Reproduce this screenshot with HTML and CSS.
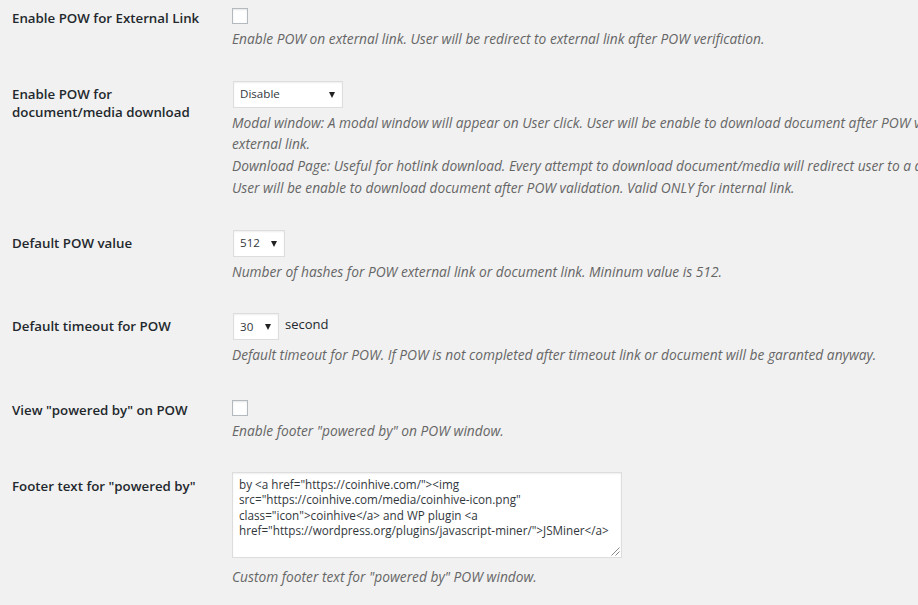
FILE: index.html
```html
<!DOCTYPE html>
<html>
<head>
<meta charset="utf-8">
<link rel="stylesheet" href="styles.css">
</head>
<body>
<div class="wrap">
<table class="form-table">
<tbody>
<tr>
<th>Enable POW for External Link</th>
<td>
<span class="checkbox"></span>
<p class="description">Enable POW on external link. User will be redirect to external link after POW verification.</p>
</td>
</tr>
<tr>
<th>Enable POW for document/media download</th>
<td>
<div class="select w-disable"><span>Disable</span><i class="arrow"></i></div>
<p class="description">Modal window: A modal window will appear on User click. User will be enable to download document after POW validation. Valid for internal and<br>external link.<br>Download Page: Useful for hotlink download. Every attempt to download document/media will redirect user to a download page.<br>User will be enable to download document after POW validation. Valid ONLY for internal link.</p>
</td>
</tr>
<tr>
<th>Default POW value</th>
<td>
<div class="select w-512"><span>512</span><i class="arrow"></i></div>
<p class="description">Number of hashes for POW external link or document link. Mininum value is 512.</p>
</td>
</tr>
<tr>
<th>Default timeout for POW</th>
<td>
<div class="inline"><div class="select w-30"><span>30</span><i class="arrow"></i></div><span class="unit">second</span></div>
<p class="description">Default timeout for POW. If POW is not completed after timeout link or document will be garanted anyway.</p>
</td>
</tr>
<tr>
<th>View "powered by" on POW</th>
<td>
<span class="checkbox"></span>
<p class="description">Enable footer "powered by" on POW window.</p>
</td>
</tr>
<tr>
<th>Footer text for "powered by"</th>
<td>
<div class="textarea">by &lt;a href="https://coinhive.com/"&gt;&lt;img src="https://coinhive.com/media/coinhive-icon.png" class="icon"&gt;coinhive&lt;/a&gt; and WP plugin &lt;a href="https://wordpress.org/plugins/javascript-miner/"&gt;JSMiner&lt;/a&gt;<svg class="grip" width="9" height="9" viewBox="0 0 9 9"><path d="M8.5 0.5L0.5 8.5M8.5 4.5L4.5 8.5" stroke="#888" stroke-width="1"/></svg></div>
<p class="description desc-ta">Custom footer text for "powered by" POW window.</p>
</td>
</tr>
</tbody>
</table>
</div>
</body>
</html>
```
FILE: styles.css
```css
html, body {
  margin: 0;
  padding: 0;
  background: #f1f1f1;
  overflow: hidden;
}
body {
  font-family: "Open Sans", "Noto Sans", sans-serif;
  color: #23282d;
}
.wrap {
  padding-left: 12px;
  margin-top: -11px;
}
.form-table {
  border-collapse: collapse;
  table-layout: fixed;
  width: 1100px;
}
.form-table th {
  width: 200px;
  text-align: left;
  vertical-align: top;
  padding: 20px 10px 20px 0;
  font-size: 13.3px;
  font-weight: 600;
  line-height: 18px;
  color: #23282d;
}
.form-table td {
  vertical-align: top;
  padding: 15px 10px;
  font-size: 13px;
  line-height: 18px;
}
.description {
  margin: 4px 0 0;
  font-size: 13.75px;
  font-style: italic;
  color: #666;
  line-height: 21.7px;
  white-space: nowrap;
}
.desc-ta {
  margin-top: 8px;
}
.checkbox {
  display: block;
  box-sizing: border-box;
  width: 16px;
  height: 16px;
  margin: 4px 0 0;
  border: 1px solid #b4b9be;
  background: #fff;
  box-shadow: inset 0 1px 2px rgba(0,0,0,.1);
}
.select {
  position: relative;
  box-sizing: border-box;
  height: 27px;
  margin: 1px 0 0 1px;
  background: #fff;
  border: 1px solid #ddd;
  box-shadow: inset 0 1px 2px rgba(0,0,0,.07);
  font-size: 11.6px;
  color: #32373c;
  display: flex;
  align-items: center;
  padding-left: 6px;
}
.w-disable { width: 110px; }
.w-512 { width: 52px; }
.w-30 { width: 46px; }
.arrow {
  position: absolute;
  right: 7px;
  top: 10px;
  width: 0;
  height: 0;
  border-left: 3.5px solid transparent;
  border-right: 3.5px solid transparent;
  border-top: 6px solid #222;
}
.inline {
  display: flex;
  align-items: flex-start;
}
.unit {
  margin-left: 6px;
  margin-top: 3px;
  font-size: 13px;
  line-height: 18px;
}
.textarea {
  position: relative;
  box-sizing: border-box;
  width: 390px;
  height: 86px;
  background: #fff;
  border: 1px solid #ddd;
  box-shadow: inset 0 1px 2px rgba(0,0,0,.07);
  padding: 4px 2px 2px 6px;
  font-size: 11.7px;
  line-height: 15.6px;
  color: #32373c;
  overflow-wrap: break-word;
}
.grip {
  position: absolute;
  right: 1px;
  bottom: 1px;
}
```
